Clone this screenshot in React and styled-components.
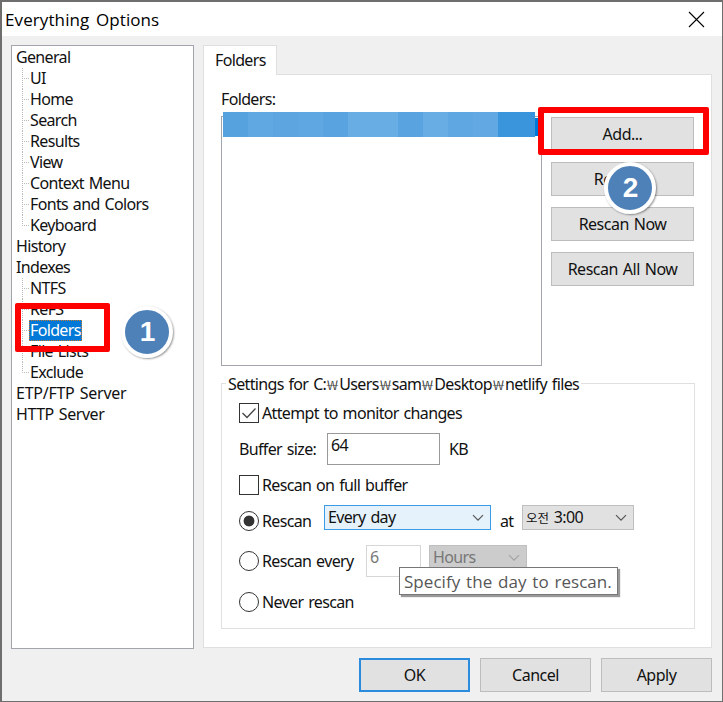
import React from "react";
import styled, { createGlobalStyle } from "styled-components";

const GlobalStyle = createGlobalStyle`
  * {
    box-sizing: border-box;
  }
  body {
    margin: 0;
    background: #6e6e6e;
    overflow: hidden;
  }
`;

const tree = [
  { name: "General", items: ["UI", "Home", "Search", "Results", "View", "Context Menu", "Fonts and Colors", "Keyboard"] },
  { name: "History", items: [] },
  { name: "Indexes", items: ["NTFS", "ReFS", "Folders", "File Lists", "Exclude"] },
  { name: "ETP/FTP Server", items: [], spacing: -0.25 },
  { name: "HTTP Server", items: [], spacing: -0.45 },
];

const stripes = [
  "#56a2df", "#60a8e2", "#5da5e1", "#5fa7e2", "#58a3e0", "#68ade4", "#68ade4",
  "#58a3e0", "#68ade4", "#5fa7e2", "#62a9e3", "#3b95dd", "#3b95dd",
];

const Chevron = ({ color = "#555" }) => (
  <svg width="12" height="8" viewBox="0 0 12 8" fill="none">
    <path d="M1 1.2 6 6.2 11 1.2" stroke={color} strokeWidth="1.2" />
  </svg>
);

const App = () => {
  return (
    <>
      <GlobalStyle />
      <Screen>
        <Dialog>
          <TitleBar>
            <Title>Everything Options</Title>
            <svg width="17" height="17" viewBox="0 0 17 17">
              <path d="M1 1 16 16M16 1 1 16" stroke="#000" strokeWidth="1.1" />
            </svg>
          </TitleBar>
          <Content>
            <Tree>
              {tree.map((group) => (
                <div key={group.name}>
                  <TreeRow $spacing={group.spacing}>{group.name}</TreeRow>
                  {group.items.length > 0 && (
                    <Branch>
                      {group.items.map((item) => (
                        <Leaf key={item}>
                          <LeafName $selected={item === "Folders"}>{item}</LeafName>
                        </Leaf>
                      ))}
                    </Branch>
                  )}
                </div>
              ))}
            </Tree>
            <Tabs>
              <Tab>Folders</Tab>
              <Panel>
                <FoldersLabel>Folders:</FoldersLabel>
                <FoldersArea>
                  <FolderList>
                    <SelectedEnd />
                    <SelectedFolder>
                      {stripes.map((color, i) => (
                        <Stripe key={i} $color={color} />
                      ))}
                    </SelectedFolder>
                  </FolderList>
                  <SideButtons>
                    <Button>Add...</Button>
                    <Button>Remove</Button>
                    <Button>Rescan Now</Button>
                    <Button>Rescan All Now</Button>
                  </SideButtons>
                </FoldersArea>
                <Settings>
                  <Legend>
                    Settings for C:<Won>₩</Won>Users<Won>₩</Won>sam<Won>₩</Won>Desktop<Won>₩</Won>netlify files
                  </Legend>
                  <Line $h={38}>
                    <Check>
                      <svg width="16" height="16" viewBox="0 0 16 16" fill="none">
                        <path d="M1.5 8 6 12.5 14.5 3.5" stroke="#444" strokeWidth="1.3" />
                      </svg>
                    </Check>
                    <Label>Attempt to monitor changes</Label>
                  </Line>
                  <Line $h={33}>
                    <Label $w={88}>Buffer size:</Label>
                    <Input $w={113} $h={32}>64</Input>
                    <Label $ml={9}>KB</Label>
                  </Line>
                  <Line $h={40}>
                    <Check />
                    <Label>Rescan on full buffer</Label>
                  </Line>
                  <Line $h={31}>
                    <Radio $on />
                    <Label $w={62}>Rescan</Label>
                    <Select $w={167} $active>
                      Every day
                      <Chevron />
                    </Select>
                    <Label $ml={9} $w={22}>at</Label>
                    <Select $w={112}>
                      <span>
                        <Meridiem>오전</Meridiem> 3:00
                      </span>
                      <Chevron />
                    </Select>
                  </Line>
                  <Line $h={50}>
                    <Radio />
                    <Label $w={104}>Rescan every</Label>
                    <Input $w={55} $h={32} $disabled>6</Input>
                    <SelectSlot>
                      <Select $w={98} $disabled>
                        Hours
                        <Chevron color="#a2a2a2" />
                      </Select>
                    </SelectSlot>
                  </Line>
                  <Line $h={32}>
                    <Radio />
                    <Label>Never rescan</Label>
                  </Line>
                  <Tooltip>Specify the day to rescan.</Tooltip>
                </Settings>
              </Panel>
            </Tabs>
          </Content>
          <Footer>
            <Button $default>OK</Button>
            <Button>Cancel</Button>
            <Button>Apply</Button>
          </Footer>
        </Dialog>
        <Marker $x={15} $y={303} $w={95} $h={49} />
        <Marker $x={538} $y={107} $w={171} $h={48} />
        <Step $x={121} $y={306}>1</Step>
        <Step $x={604} $y={162}>2</Step>
      </Screen>
    </>
  );
};

const Screen = styled.div`
  position: relative;
  width: 723px;
  height: 702px;
  padding: 2px 1px 1px 2px;
  background: #6e6e6e;
  font-family: "Noto Sans", "Noto Sans CJK KR", sans-serif;
  font-size: 16px;
  letter-spacing: -0.65px;
  word-spacing: 1.3px;
  line-height: 21px;
  color: #111;
  white-space: nowrap;
`;

const Dialog = styled.div`
  height: 699px;
  background: #f0f0f0;
`;

const TitleBar = styled.div`
  display: flex;
  align-items: center;
  justify-content: space-between;
  height: 34px;
  padding: 0 17px 0 3px;
  background: #fff;
`;

const Title = styled.span`
  font-family: "Open Sans", sans-serif;
  font-size: 17px;
  letter-spacing: 0.1px;
  word-spacing: 2px;
  color: #000;
`;

const Content = styled.div`
  display: grid;
  grid-template-columns: 183px 509px;
  gap: 9px;
  height: 612px;
  padding: 9px 0 0 9px;
`;

const Tree = styled.div`
  height: 604px;
  padding: 1px 0 0 4px;
  border: 1px solid #a3a5ac;
  background: #fff;
`;

const TreeRow = styled.div`
  height: 21px;
  letter-spacing: ${({ $spacing }) => ($spacing ? `${$spacing}px` : "inherit")};
`;

const Branch = styled.div`
  margin-left: 6px;
`;

const Leaf = styled.div`
  display: flex;
  align-items: center;
  height: 21px;
  background:
    repeating-linear-gradient(to bottom, #bbb 0 1px, transparent 1px 2px) 0 0 / 1px 100% no-repeat,
    repeating-linear-gradient(to right, #bbb 0 1px, transparent 1px 2px) 0 10px / 7px 1px no-repeat;

  &:last-child {
    background-size: 1px 11px, 7px 1px;
  }
`;

const LeafName = styled.span`
  height: 21px;
  margin-left: 7px;
  padding: 0 1px;
  ${({ $selected }) =>
    $selected &&
    `
    background: #0078d7;
    color: #fff;
    outline: 1px dotted #c87a2b;
    outline-offset: -1px;
  `}
`;

const Tabs = styled.div`
  display: flex;
  flex-direction: column;
`;

const Tab = styled.div`
  z-index: 1;
  width: 74px;
  height: 30px;
  padding: 4px 0 0 11px;
  border: 1px solid #dfdfdf;
  border-bottom: none;
  background: #fff;
`;

const Panel = styled.div`
  height: 574px;
  margin-top: -1px;
  padding: 14px 16px 0 17px;
  border: 1px solid #dfdfdf;
  background: #fff;
`;

const FoldersLabel = styled.div`
  height: 27px;
`;

const FoldersArea = styled.div`
  display: flex;
  gap: 9px;
  height: 250px;
`;

const FolderList = styled.div`
  position: relative;
  width: 321px;
  height: 250px;
  border: 1px solid #a3a5ac;
`;

const SelectedEnd = styled.div`
  position: absolute;
  top: 1px;
  right: 0;
  width: 8px;
  height: 18px;
  background: #0078d7;
`;

const SelectedFolder = styled.div`
  position: absolute;
  top: -5px;
  left: 1px;
  display: flex;
  width: 312px;
  height: 25px;
  overflow: hidden;
`;

const Stripe = styled.div`
  flex: 0 0 25px;
  background: ${({ $color }) => $color};
`;

const Button = styled.button`
  height: 34px;
  padding: 0;
  border: ${({ $default }) => ($default ? "2px solid #2b8bdc" : "1px solid #bdbdbd")};
  background: #e1e1e1;
  font: inherit;
  letter-spacing: -0.5px;
  word-spacing: inherit;
  color: inherit;
`;

const SideButtons = styled.div`
  display: grid;
  grid-auto-rows: 34px;
  gap: 11px;
  width: 143px;
  padding-top: 1px;
`;

const Settings = styled.div`
  position: relative;
  height: 246px;
  margin-top: 17px;
  padding: 0 0 0 17px;
  border: 1px solid #e0e0e0;
`;

const Legend = styled.div`
  width: fit-content;
  height: 20px;
  margin: -10px 0 0 -13px;
  padding: 0 2px;
  background: #fff;
`;

const Won = styled.span`
  display: inline-block;
  width: 13px;
  font-family: "Noto Sans CJK KR", sans-serif;
  font-size: 13.5px;
  font-weight: 300;
  letter-spacing: 0;
  text-align: center;
  color: #444;
  transform: scaleX(1.5);
`;

const Line = styled.div`
  display: flex;
  align-items: center;
  height: ${({ $h }) => $h}px;
`;

const Label = styled.span`
  width: ${({ $w }) => ($w ? `${$w}px` : "auto")};
  margin-left: ${({ $ml }) => $ml || 0}px;
  padding-top: 1px;
`;

const Check = styled.span`
  display: grid;
  place-items: center;
  width: 20px;
  height: 20px;
  margin-right: 3px;
  border: 1.5px solid #333;
`;

const Radio = styled.span`
  width: 20px;
  height: 20px;
  margin-right: 3px;
  border: 1.5px solid #333;
  border-radius: 50%;
  background: ${({ $on }) => ($on ? "radial-gradient(circle, #333 5px, #fff 5.8px)" : "#fff")};
`;

const Input = styled.div`
  width: ${({ $w }) => $w}px;
  height: ${({ $h }) => $h}px;
  padding: 1px 3px;
  border: 1px solid ${({ $disabled }) => ($disabled ? "#d6d6d6" : "#999")};
  color: ${({ $disabled }) => ($disabled ? "#777" : "inherit")};
`;

const Select = styled.div`
  display: flex;
  align-items: center;
  align-self: flex-start;
  justify-content: space-between;
  width: ${({ $w }) => $w}px;
  height: 25px;
  padding: 0 6px 0 3px;
  border: 1px solid ${({ $active }) => ($active ? "#3c9be5" : "#bfbfbf")};
  background: ${({ $active, $disabled }) => ($active ? "#e5f1fb" : $disabled ? "#ccc" : "#e1e1e1")};
  color: ${({ $disabled }) => ($disabled ? "#777" : "inherit")};
`;

const SelectSlot = styled.div`
  align-self: flex-start;
  padding: 9px 0 0 8px;
`;

const Meridiem = styled.span`
  font-family: "Noto Sans CJK KR", sans-serif;
  font-size: 12.5px;
  letter-spacing: 0;
`;

const Tooltip = styled.div`
  position: absolute;
  top: 183px;
  left: 177px;
  width: 219px;
  height: 28px;
  padding: 3px 0 0 4px;
  border: 1px solid #777;
  background: #fff;
  box-shadow: 2px 2px 1px rgba(0, 0, 0, 0.4);
  font-family: "Open Sans", sans-serif;
  font-size: 17px;
  letter-spacing: 0.05px;
  word-spacing: 1.3px;
  color: #575757;
`;

const Footer = styled.div`
  display: grid;
  grid-template-columns: repeat(3, 111px);
  gap: 10px;
  justify-content: end;
  padding: 10px 10px 0 0;
`;

const Marker = styled.div`
  position: absolute;
  left: ${({ $x }) => $x}px;
  top: ${({ $y }) => $y}px;
  width: ${({ $w }) => $w}px;
  height: ${({ $h }) => $h}px;
  border: 6px solid #f00;
  border-radius: 2px;
`;

const Step = styled.div`
  position: absolute;
  left: ${({ $x }) => $x}px;
  top: ${({ $y }) => $y}px;
  width: 52px;
  height: 52px;
  padding-left: 1px;
  border: 4px solid #fff;
  border-radius: 50%;
  background: #4f81b9;
  box-shadow: 1px 1px 2px rgba(0, 0, 0, 0.4);
  font-family: "Liberation Sans", Arial, sans-serif;
  font-size: 28px;
  font-weight: bold;
  letter-spacing: 0;
  line-height: 44px;
  text-align: center;
  color: #fff;
`;

export default App;
